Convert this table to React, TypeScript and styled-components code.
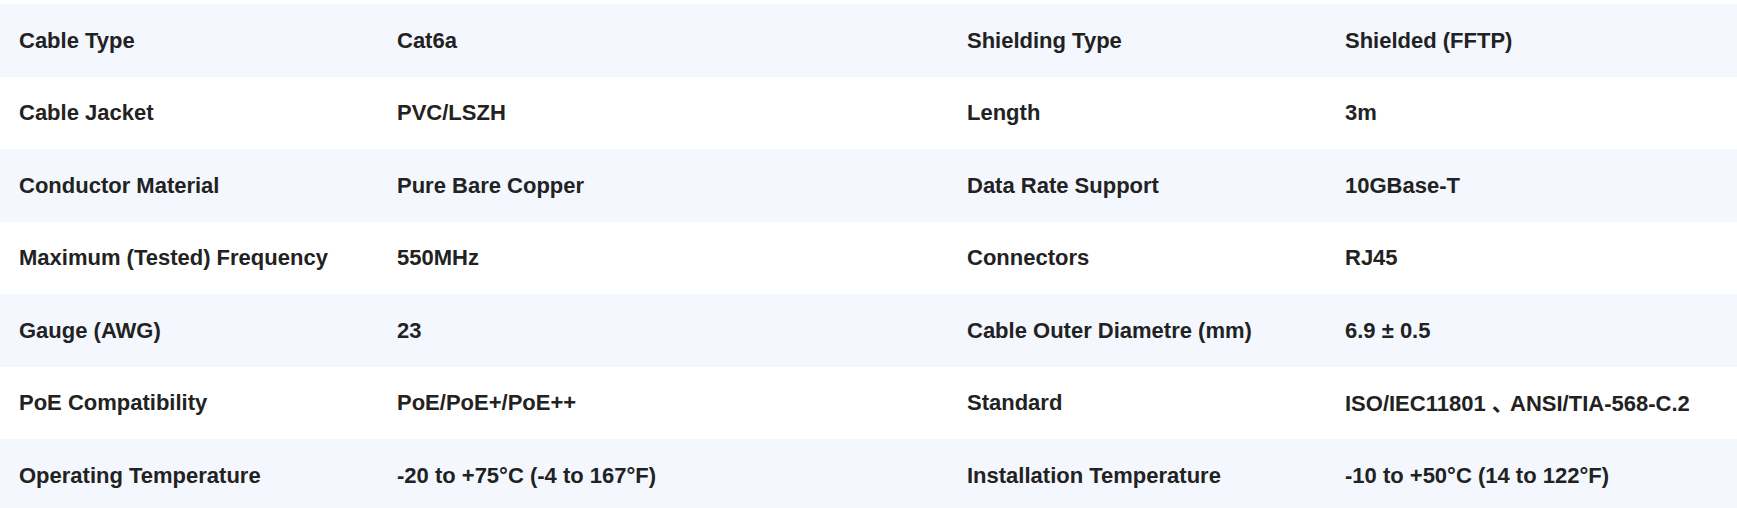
import React from "react";
import styled, { createGlobalStyle } from "styled-components";

const Global = createGlobalStyle`
  html, body { margin: 0; padding: 0; background: #ffffff; }
  body { font-family: "Liberation Sans", Arial, sans-serif; }
`;

const Table = styled.div`
  display: flex;
  flex-direction: column;
  padding-top: 4px;
  width: 100%;
`;

const Row = styled.div<{ $shaded: boolean }>`
  display: grid;
  grid-template-columns: 378px 570px 378px 1fr;
  align-items: center;
  height: 72.5px;
  background: ${(p) => (p.$shaded ? "#f4f8fe" : "#ffffff")};
`;

const Cell = styled.div`
  padding-left: 19px;
  font-size: 22px;
  line-height: 25px;
  font-weight: 700;
  color: #222222;
  white-space: nowrap;
`;

const Sep = styled.span`
  font-family: "Noto Sans CJK SC", sans-serif;
  line-height: 25px;
  display: inline-block;
  width: 13px;
  vertical-align: baseline;
`;

const renderText = (t: string) => {
  if (!t.includes("、")) return t;
  const [a, b] = t.split("、");
  return (
    <>
      {a}
      <Sep>、</Sep>
      {b}
    </>
  );
};

const rows: [string, string, string, string][] = [
  ["Cable Type", "Cat6a", "Shielding Type", "Shielded (FFTP)"],
  ["Cable Jacket", "PVC/LSZH", "Length", "3m"],
  ["Conductor Material", "Pure Bare Copper", "Data Rate Support", "10GBase-T"],
  ["Maximum (Tested) Frequency", "550MHz", "Connectors", "RJ45"],
  ["Gauge (AWG)", "23", "Cable Outer Diametre (mm)", "6.9 ± 0.5"],
  ["PoE Compatibility", "PoE/PoE+/PoE++", "Standard", "ISO/IEC11801 、 ANSI/TIA-568-C.2"],
  ["Operating Temperature", "-20 to +75°C (-4 to 167°F)", "Installation Temperature", "-10 to +50°C (14 to 122°F)"],
];

export default function App() {
  return (
    <>
      <Global />
      <Table>
        {rows.map((r, i) => (
          <Row key={i} $shaded={i % 2 === 0}>
            {r.map((c, j) => (
              <Cell key={j}>{renderText(c)}</Cell>
            ))}
          </Row>
        ))}
      </Table>
    </>
  );
}
